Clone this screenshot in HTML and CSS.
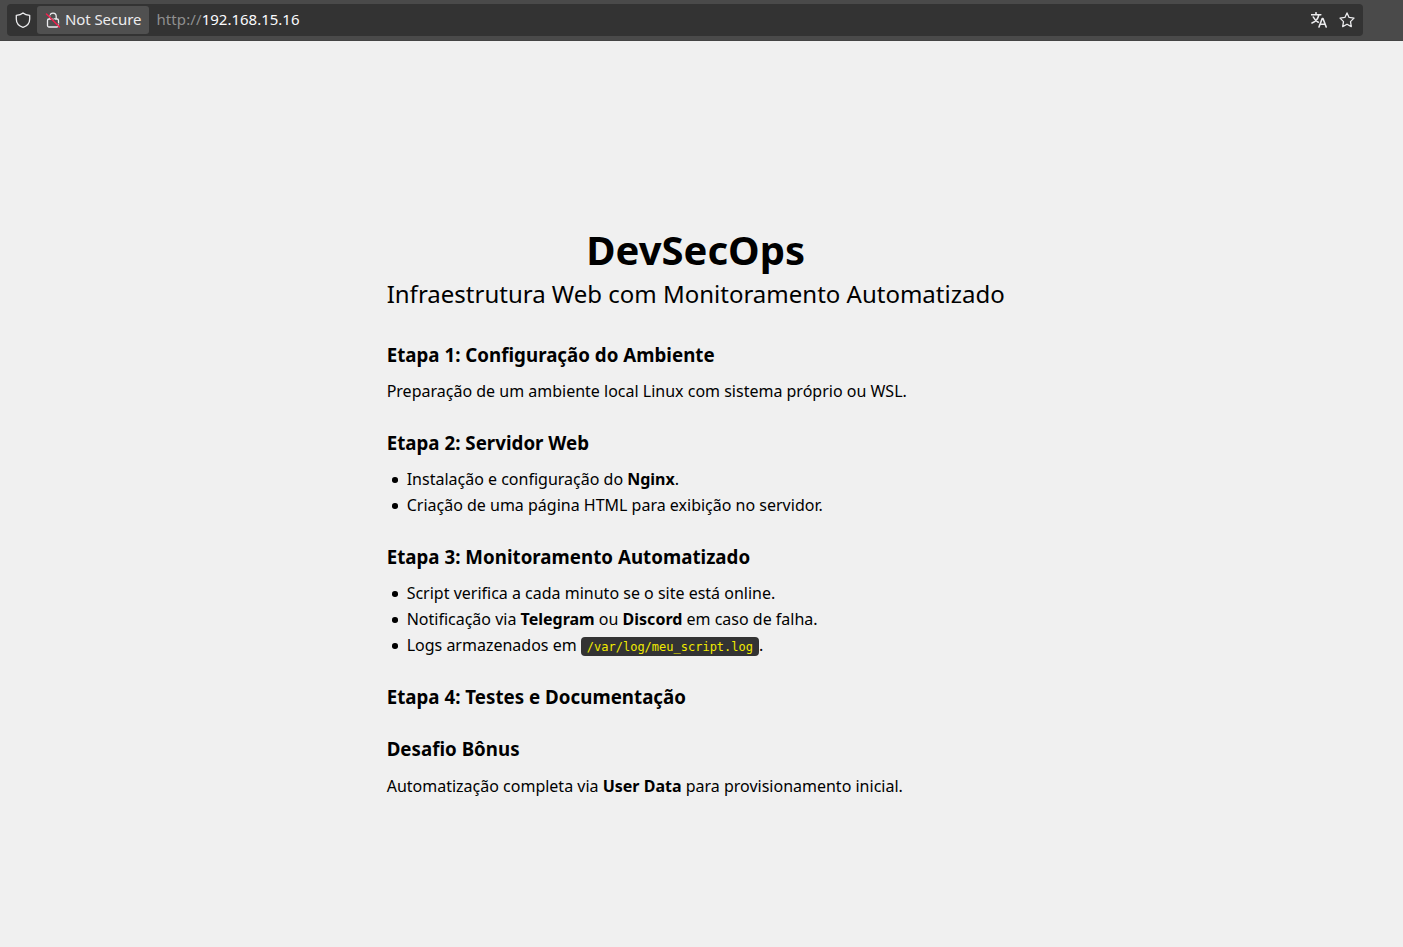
FILE: index.html
```html
<!DOCTYPE html>
<html lang="pt-BR">
<head>
<meta charset="utf-8">
<title>DevSecOps</title>
<link rel="stylesheet" href="styles.css">
</head>
<body>
<header class="toolbar">
  <div class="urlbar">
    <svg class="shield" width="16" height="16" viewBox="0 0 16 16"><path d="M8 .9C6.500 2.300 4 3.200 1.300 3.300V7c0 3.800 2.500 7 6.700 8.300 4.200-1.300 6.700-4.500 6.700-8.300V3.300C12 3.200 9.500 2.300 8 .9Z"/></svg>
    <div class="security">
      <svg width="16" height="16" viewBox="0 0 16 16"><path d="M4.800 7V4.300a3.200 3.200 0 0 1 6.400 0V7M4 7h8a1.500 1.500 0 0 1 1.500 1.500V13.500A1.500 1.500 0 0 1 12 15H4a1.500 1.500 0 0 1-1.500-1.500V8.500A1.500 1.500 0 0 1 4 7Z"/><path class="gap" d="M2.800 1.200 15.500 13.900"/><path class="slash" d="M1.500 2 14.500 15"/></svg>
      <span>Not Secure</span>
    </div>
    <div class="address"><span class="scheme">http://</span>192.168.15.16</div>
    <div class="actions">
      <svg class="translate" width="16" height="16" viewBox="0 0 16 16"><path d="M.5 2.700h9.300M5 .7v2M2.300 5c1.200 2.500 3 4.200 5 5.200M7.800 2.900C7.200 6.500 4.200 9.800 1 11M8 15l3.200-8.500h.8L15.200 15M9.400 12.300h4.700"/></svg>
      <svg width="16" height="16" viewBox="0 0 16 16"><path d="m8 .9 2.100 4.500 4.900.7-3.500 3.500.8 5L8 12.200l-4.300 2.400.8-5L1 6.100l4.900-.7Z"/></svg>
    </div>
  </div>
</header>
<main class="page">
  <article class="content">
    <h1>DevSecOps</h1>
    <p class="subtitle">Infraestrutura Web com Monitoramento Automatizado</p>
    <section><h2>Etapa 1: Configuração do Ambiente</h2><p>Preparação de um ambiente local Linux com sistema próprio ou WSL.</p></section>
    <section><h2>Etapa 2: Servidor Web</h2><ul><li>Instalação e configuração do <b>Nginx</b>.</li><li>Criação de uma página HTML para exibição no servidor.</li></ul></section>
    <section><h2>Etapa 3: Monitoramento Automatizado</h2><ul><li>Script verifica a cada minuto se o site está online.</li><li>Notificação via <b>Telegram</b> ou <b>Discord</b> em caso de falha.</li><li>Logs armazenados em <code>/var/log/meu_script.log</code>.</li></ul></section>
    <section><h2>Etapa 4: Testes e Documentação</h2></section>
    <section class="bonus"><h2>Desafio Bônus</h2><p>Automatização completa via <b>User Data</b> para provisionamento inicial.</p></section>
  </article>
</main>
</body>
</html>
```
FILE: styles.css
```css
* { box-sizing: border-box; margin: 0; padding: 0; }
body { font: 16px/26px "Noto Sans", sans-serif; background: #f0f0f0; color: #000; }
.toolbar { height: 41px; background: #4a4a4a; border-bottom: 1px solid #444; padding: 4px 40px 4px 7px; }
.urlbar { height: 32px; background: #333; border-radius: 4px; display: flex; align-items: center; padding: 0 8px; font: 15px/20px "Noto Sans", sans-serif; color: #fbfbfe; }
.security span, .address { padding-bottom: 2px; }
svg { display: block; fill: none; stroke: #ececee; stroke-width: 1.300; stroke-linejoin: round; stroke-linecap: round; flex: none; }
.translate { stroke-width: 1.600; }
.gap { stroke: #505050; stroke-width: 1; }
.slash { stroke: #f0204e; stroke-width: 1.500; }
.security { margin: 0 7.500px 0 6px; width: 112px; height: 28px; background: #505050; border-radius: 3px; display: flex; align-items: center; gap: 4px; padding-left: 8px; white-space: nowrap; }
.security span { letter-spacing: -.1px; color: #ececee; }
.scheme { color: #8f8f8f; letter-spacing: .09px; }
.actions { display: flex; gap: 12px; margin-left: auto; }
.page { height: 906px; display: flex; justify-content: center; padding: 183px 12.700px 0 0; }
.content { width: 617px; }
h1 { font-size: 40px; line-height: 52px; text-align: center; padding-left: 1px; }
.subtitle { font-size: 24px; line-height: 36px; white-space: nowrap; }
section { padding-top: 26px; }
h2 { font-size: 18.720px; line-height: 26px; letter-spacing: .02px; }
.subtitle + section { padding-top: 30px; }
h2 + p, h2 + ul { padding-top: 10px; }
.bonus p { padding-top: 11px; }
ul { padding-left: 20px; list-style: none; }
li::before { content: ""; float: left; width: 5.600px; height: 5.600px; border-radius: 50%; background: #000; margin: 11px 0 0 -14.200px; }
code { font: 12px/15px "DejaVu Sans Mono", monospace; background: #333; color: #f0ea00; padding: 3px 6px 2px; border-radius: 4px; }
```
